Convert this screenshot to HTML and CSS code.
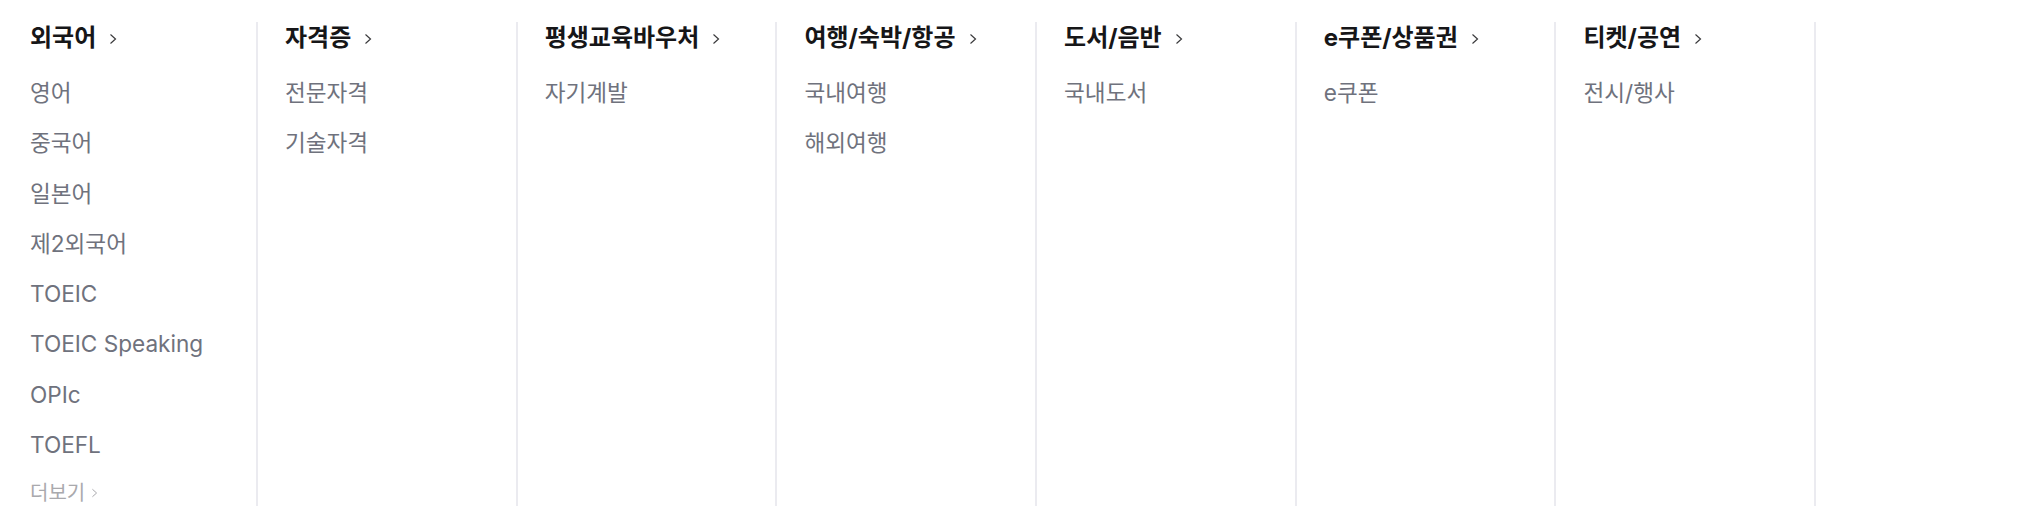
FILE: index.html
```html
<!DOCTYPE html>
<html lang="ko">
<head>
<meta charset="utf-8">
<title>카테고리</title>
<link rel="stylesheet" href="styles.css">
</head>
<body>
<div class="menu">
  <div class="col first">
    <a class="head">외국어<svg class="chev" viewBox="0 0 8 12"><path d="M1.5 1.5 L6.5 6 L1.5 10.5"/></svg></a>
    <ul class="list">
      <li>영어</li>
      <li>중국어</li>
      <li>일본어</li>
      <li>제2외국어</li>
      <li>TOEIC</li>
      <li>TOEIC Speaking</li>
      <li>OPIc</li>
      <li>TOEFL</li>
    </ul>
    <a class="more">더보기<svg class="chev-s" viewBox="0 0 8 12"><path d="M1.5 1.5 L6.5 6 L1.5 10.5"/></svg></a>
  </div>
  <div class="col">
    <a class="head">자격증<svg class="chev" viewBox="0 0 8 12"><path d="M1.5 1.5 L6.5 6 L1.5 10.5"/></svg></a>
    <ul class="list">
      <li>전문자격</li>
      <li>기술자격</li>
    </ul>
  </div>
  <div class="col">
    <a class="head">평생교육바우처<svg class="chev" viewBox="0 0 8 12"><path d="M1.5 1.5 L6.5 6 L1.5 10.5"/></svg></a>
    <ul class="list">
      <li>자기계발</li>
    </ul>
  </div>
  <div class="col">
    <a class="head">여행/숙박/항공<svg class="chev" viewBox="0 0 8 12"><path d="M1.5 1.5 L6.5 6 L1.5 10.5"/></svg></a>
    <ul class="list">
      <li>국내여행</li>
      <li>해외여행</li>
    </ul>
  </div>
  <div class="col">
    <a class="head">도서/음반<svg class="chev" viewBox="0 0 8 12"><path d="M1.5 1.5 L6.5 6 L1.5 10.5"/></svg></a>
    <ul class="list">
      <li>국내도서</li>
    </ul>
  </div>
  <div class="col">
    <a class="head">e쿠폰/상품권<svg class="chev" viewBox="0 0 8 12"><path d="M1.5 1.5 L6.5 6 L1.5 10.5"/></svg></a>
    <ul class="list">
      <li>e쿠폰</li>
    </ul>
  </div>
  <div class="col">
    <a class="head">티켓/공연<svg class="chev" viewBox="0 0 8 12"><path d="M1.5 1.5 L6.5 6 L1.5 10.5"/></svg></a>
    <ul class="list">
      <li>전시/행사</li>
    </ul>
  </div>
  <div class="col last"></div>
</div>
</body>
</html>
```
FILE: styles.css
```css
html, body {
  margin: 0;
  padding: 0;
  background: #ffffff;
  overflow: hidden;
}

body {
  font-family: "Inter", "Noto Sans CJK KR", sans-serif;
  -webkit-font-smoothing: antialiased;
}

.menu {
  display: flex;
  padding-top: 22px;
}

.col {
  flex: 0 0 259.7px;
  box-sizing: border-box;
  height: 484px;
  border-left: 2px solid #ebebf0;
  padding-left: 27px;
  display: flex;
  flex-direction: column;
  align-items: flex-start;
}

.col.first {
  flex-basis: 256px;
  border-left: 0;
  padding-left: 30px;
}

.head {
  display: flex;
  align-items: center;
  font-size: 24px;
  font-weight: 700;
  line-height: 32px;
  color: #161618;
}

.chev {
  width: 8px;
  height: 12px;
  margin-left: 13px;
  margin-top: 1px;
  fill: none;
  stroke: #3a3a3c;
  stroke-width: 1.2;
}

.list {
  list-style: none;
  margin: 14px 0 0;
  padding: 0;
}

.list li {
  font-size: 22.6px;
  line-height: 50.3px;
  color: #6f727d;
}

.more {
  display: flex;
  align-items: center;
  margin-top: 3px;
  font-size: 20px;
  line-height: 40px;
  color: #a9a9ad;
}

.chev-s {
  width: 7px;
  height: 10px;
  margin-left: 6px;
  fill: none;
  stroke: #a9a9ad;
  stroke-width: 1.2;
}
```
